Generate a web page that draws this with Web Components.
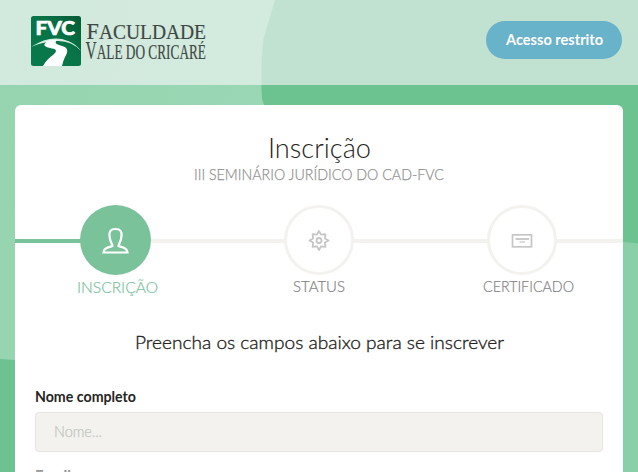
<!DOCTYPE html>
<html lang="pt-BR">
<head>
<meta charset="utf-8">
<title>Inscrição</title>
<style>
html,body{margin:0;height:472px;overflow:hidden;font-family:Lato,"Open Sans",sans-serif}
</style>
</head>
<body>
<event-page></event-page>
<script>
const define = (name, html, setup) => customElements.define(name, class extends HTMLElement {
  connectedCallback() {
    if (this.shadowRoot) return;
    const root = this.attachShadow({mode: 'open'});
    const t = document.createElement('template');
    t.innerHTML = html;
    root.append(t.content.cloneNode(true));
    if (setup) setup(this, root);
  }
});

// One line of text set to an exact advance width.
define('fit-text', `<style>:host{display:block;flex:none}svg{display:block;overflow:visible}text{fill:currentColor;stroke:currentColor;stroke-width:var(--ink,0)}</style>
<svg><text x="0" lengthAdjust="spacingAndGlyphs"></text></svg>`, (el, root) => {
  const w = el.getAttribute('w'), h = el.getAttribute('h');
  const svg = root.querySelector('svg'), t = root.querySelector('text');
  svg.setAttribute('width', w); svg.setAttribute('height', h);
  t.setAttribute('y', el.getAttribute('base'));
  t.setAttribute('textLength', w);
  t.textContent = el.getAttribute('text');
});

define('page-backdrop', `<style>:host{position:absolute;inset:0;z-index:-1}svg{display:block}</style>
<svg width="638" height="472">
<defs><linearGradient id="a" x1="0" y1="0" x2="1" y2=".3"><stop stop-color="#96d4af"/><stop offset="1" stop-color="#9ad7b4"/></linearGradient></defs>
<rect width="638" height="472" fill="#6cc390"/>
<path d="M0 0H275L263.5 39Q260 68 262 99L264 105V360H15L0 359Z" fill="url(#a)"/>
<path d="M600 241L623 242L638 243.500V472H600Z" fill="#8bcfa8"/>
</svg>`);

define('fvc-logo', `<style>:host{display:block}svg{display:block;overflow:visible}</style>
<svg width="190" height="54" viewBox="0 0 190 54">
<defs><linearGradient id="g" x1="0" y1="1" x2="1" y2="0"><stop stop-color="#087a4d"/><stop offset=".55" stop-color="#087448"/><stop offset="1" stop-color="#035a35"/></linearGradient></defs>
<rect x="0" y="1" width="50" height="50" rx="2.500" fill="url(#g)"/>
<text x="4.500" y="20" textLength="39.500" lengthAdjust="spacingAndGlyphs" font-family="Lato,sans-serif" font-weight="900" font-size="19.500" fill="#fff" stroke="#fff" stroke-width=".7">FVC</text>
<path d="M0 32Q20 19 37 26Q45 29 50 36Q40 25 25 26Q11 27 0 32Z" fill="#d7eee0"/>
<path d="M19 25H26C23 28 25 29 31 31C38 33 37 37 34 42Q32 46 31 51H12Q16 44 22 40C28 35 24 34 19 33C10 31 13 28 19 25Z" fill="#fff"/>
<g font-family="'Liberation Serif',serif" fill="#3d4843" stroke="#3d4843" stroke-width=".2">
<text x="55.500" y="23.500" font-size="24" textLength="119.500" lengthAdjust="spacingAndGlyphs">F<tspan font-size="21">ACULDADE</tspan></text>
<text x="54.500" y="44" font-size="25" textLength="120.500" lengthAdjust="spacingAndGlyphs">V<tspan font-size="21.500">ALE DO CRICARÉ</tspan></text></g>
</svg>`);

define('pill-button', `<style>:host{display:flex;align-items:center;justify-content:center;width:136px;height:38px;border-radius:19px;background:#68b2ca;color:#fff;font:700 14.5px Lato,sans-serif}</style><slot></slot>`);

define('top-bar', `<style>:host{display:flex;box-sizing:border-box;height:85px;padding:0 16px 0 31px;justify-content:space-between;background:rgba(250,246,252,.6)}
fvc-logo{margin-top:15px}pill-button{margin-top:21px}</style>
<fvc-logo></fvc-logo><pill-button><fit-text text="Acesso restrito" w="97" h="20" base="15"></fit-text></pill-button>`);

define('wizard-step', `<style>
:host{position:relative;display:flex;flex-direction:column;align-items:center;flex:1;color:#828282;font:300 15.5px Lato,sans-serif;--ink:.2px;
background:linear-gradient(#f3f2ee,#f3f2ee) 0 34px/100% 4px no-repeat}
.disc{box-sizing:border-box;width:70px;height:70px;border:3px solid #f3f2ee;border-radius:50%;background:#fff;display:grid;place-items:center;color:#c6c6c6}
.name{margin-top:2px;padding-left:var(--shift,0)}
:host([active]){color:#7ac29a;background:linear-gradient(90deg,#7ac29a 50%,#f3f2ee 50%) 0 34px/100% 4px no-repeat}
:host([active]) .disc{width:71px;background:#7ac29a;border-color:#7ac29a;color:#fff;margin-right:2px}
</style><div class="disc"><slot name="icon"></slot></div><div class="name"><slot></slot></div>`);

define('text-field', `<style>
:host{display:block}.label{color:#252422;font:700 14.5px Lato,sans-serif}
.box{box-sizing:border-box;height:40px;margin-top:4px;padding:9px 18px;border:1px solid #e5e4df;border-radius:4px;background:#f3f2ee;color:#c3c5c1;font:300 15.5px Lato,sans-serif;--ink:.25px}
</style><div class="label"><slot name="label"></slot></div><div class="box"><slot></slot></div>`);

define('wizard-card', `<style>
:host{display:flex;flex-direction:column;box-sizing:border-box;height:400px;margin:20px 15px 0;padding-top:30px;border-radius:6px 6px 0 0;background:#fff;align-items:center}
.title{color:#252422;font:300 27px Lato,sans-serif}
.sub{color:#929292;font:300 15.5px Lato,sans-serif;--ink:.25px}
.steps{display:flex;width:100%;margin-top:18px}
.lead{margin-top:29px;color:#252422;font:300 18.5px Lato,sans-serif;--ink:.35px}
.form{box-sizing:border-box;width:100%;padding:0 20px;margin-top:32px;display:grid;gap:14px}
svg{display:block}
</style>
<fit-text class="title" text="Inscrição" w="103" h="30" base="22.5"></fit-text>
<fit-text class="sub" text="III SEMINÁRIO JURÍDICO DO CAD-FVC" w="250" h="22" base="14.5"></fit-text>
<div class="steps">
<wizard-step active style="--shift:3px"><svg slot="icon" width="28" height="28" viewBox="0 0 28 28" fill="none" stroke="currentColor" stroke-width="2.200"><path d="M11.500 20C11.500 18 8.500 15 8.500 10C8 5.500 9.500 3 14.500 3S21 5.500 20.500 10C20.500 15 17.500 18 17.500 20C20 21.500 26 20.500 26.500 26.500H2.500C3 20.500 9 21.500 11.500 20Z"/></svg>
<fit-text text="INSCRIÇÃO" w="81" h="20" base="16"></fit-text></wizard-step>
<wizard-step><svg slot="icon" width="22" height="22" viewBox="0 0 22 22" fill="none" stroke="currentColor" stroke-width="1.800" stroke-linejoin="round"><path d="M11 2L13 5.600L17.400 5.100L16.900 9.500L20.500 11.500L16.900 13.500L17.400 17.900L13 17.400L11 21L9 17.400L4.600 17.900L5.100 13.500L1.500 11.500L5.100 9.500L4.600 5.100L9 5.600Z"/><circle cx="11" cy="11.500" r="2.500"/></svg>
<fit-text text="STATUS" w="52" h="20" base="15"></fit-text></wizard-step>
<wizard-step style="--shift:14px"><svg slot="icon" width="22" height="22" viewBox="0 0 22 22" fill="none" stroke="currentColor" stroke-width="1.700"><rect x="1.500" y="5.800" width="19" height="12"/><path d="M4.500 10H18" stroke-width="1.800"/><path d="M8.500 13H14" stroke-width="1.800" opacity=".65"/></svg>
<fit-text text="CERTIFICADO" w="91" h="20" base="15"></fit-text></wizard-step>
</div>
<fit-text class="lead" text="Preencha os campos abaixo para se inscrever" w="369" h="30" base="23"></fit-text>
<div class="form">
<text-field><fit-text slot="label" text="Nome completo" w="101" h="20" base="14"></fit-text><fit-text text="Nome..." w="48" h="20" base="15"></fit-text></text-field>
<text-field><fit-text slot="label" text="Email" w="36" h="20" base="15" style="color:#999"></fit-text></text-field>
</div>`);

define('event-page', `<style>:host{display:block;position:relative;width:638px;height:472px;overflow:hidden;z-index:0}</style>
<page-backdrop></page-backdrop><top-bar></top-bar><wizard-card></wizard-card>`);
</script>
</body>
</html>
